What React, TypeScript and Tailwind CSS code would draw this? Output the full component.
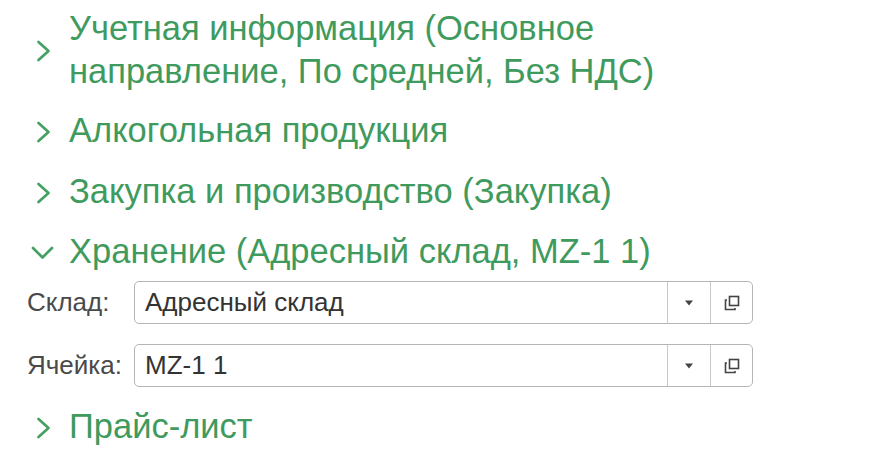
import React from "react";

const green = "text-[#3f9a5e]";

function ChevronRight() {
  return (
    <svg width="17" height="22" viewBox="0 0 17 22" className="shrink-0">
      <path d="M2.5 2 L12.5 11 L2.5 20" fill="none" stroke="#45a064" strokeWidth="2.7" strokeLinecap="round" strokeLinejoin="round" />
    </svg>
  );
}

function ChevronDown() {
  return (
    <svg width="24" height="14" viewBox="0 0 24 14" className="shrink-0">
      <path d="M2 2 L11.5 11.5 L21 2" fill="none" stroke="#45a064" strokeWidth="2.7" strokeLinecap="round" strokeLinejoin="round" />
    </svg>
  );
}

function Group({ title, open }: { title: React.ReactNode; open?: boolean }) {
  return (
    <div className="flex items-center">
      <div className={`w-[69px] shrink-0 flex ${open ? "pl-[31px] pt-[2px]" : "pl-[36px] pt-[2px]"}`}>
        {open ? <ChevronDown /> : <ChevronRight />}
      </div>
      <div className={`text-[34.5px] leading-[43px] ${green}`}>{title}</div>
    </div>
  );
}

function Field({ label, value }: { label: string; value: string }) {
  return (
    <div className="flex items-center">
      <div className="w-[134px] pl-[27px] text-[26px] text-[#4a4a4a] shrink-0">{label}</div>
      <div className="flex h-[43px] w-[619px] rounded-[5px] border border-[#b5b5b5] bg-white">
        <div className="flex-1 flex items-center pl-[10px] text-[26px] text-[#333333]">{value}</div>
        <div className="w-[43px] border-l border-[#c8c8c8] flex items-center justify-center">
          <svg width="10" height="6" viewBox="0 0 10 6">
            <path d="M1 0.5 L9 0.5 L5 5.5 Z" fill="#444" />
          </svg>
        </div>
        <div className="w-[42px] border-l border-[#c8c8c8] flex items-center justify-center">
          <svg width="18" height="18" viewBox="0 0 18 18">
            <rect x="6.5" y="2.5" width="9" height="9" fill="none" stroke="#444" strokeWidth="1.6" />
            <path d="M4 6 L2.5 6 L2.5 15.5 L12 15.5 L12 14" fill="none" stroke="#444" strokeWidth="1.6" />
          </svg>
        </div>
      </div>
    </div>
  );
}

export default function App() {
  return (
    <div className="w-[892px] h-[466px] bg-white overflow-hidden font-['Liberation_Sans',Arial,sans-serif]">
      <div className="pt-[7px] flex flex-col">
        <Group
          title={
            <>
              Учетная информация (Основное
              <br />
              направление, По средней, Без НДС)
            </>
          }
        />
        <div className="mt-[16px]">
          <Group title="Алкогольная продукция" />
        </div>
        <div className="mt-[18px]">
          <Group title="Закупка и производство (Закупка)" />
        </div>
        <div className="mt-[17px]">
          <Group title="Хранение (Адресный склад, MZ-1 1)" open />
        </div>
        <div className="mt-[8px] flex flex-col gap-[20px]">
          <Field label="Склад:" value="Адресный склад" />
          <Field label="Ячейка:" value="MZ-1 1" />
        </div>
        <div className="mt-[18px]">
          <Group title="Прайс-лист" />
        </div>
      </div>
    </div>
  );
}
